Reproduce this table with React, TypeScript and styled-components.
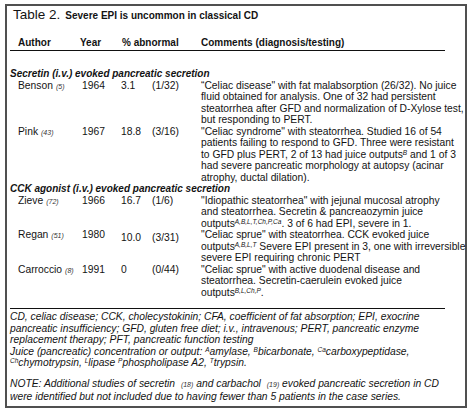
import React from "react";
import styled, { createGlobalStyle } from "styled-components";

const Global = createGlobalStyle`
  html, body { margin: 0; padding: 0; background: #ffffff; }
  body {
    font-family: "Liberation Sans", Arial, sans-serif;
    color: #131313;
  }
`;

const Frame = styled.div`
  box-sizing: border-box;
  margin: 4px 0 0 5px;
  width: 462px;
  height: 404px;
  border: 2px solid #505050;
  padding: 0 0 0 3px;
`;

const Title = styled.div`
  display: flex;
  align-items: baseline;
  gap: 5px;
  padding-left: 3px;
  height: 18px;
  line-height: 18px;
`;

const TitleNum = styled.span`
  font-size: 13.5px;
`;

const TitleText = styled.span`
  font-size: 10px;
  font-weight: bold;
`;

const HeaderRow = styled.div`
  display: grid;
  grid-template-columns: 70px 42px 79px 1fr;
  width: 435px;
  margin-top: 13px;
  padding-bottom: 1px;
  border-bottom: 1px solid #111;
  font-size: 10px;
  font-weight: bold;
  line-height: 12px;
`;

const HeadCell = styled.div<{ $pad?: number }>`
  padding-left: ${(p) => p.$pad ?? 0}px;
  white-space: nowrap;
`;

const SectionHead = styled.div<{ $gap?: number }>`
  margin-top: ${(p) => p.$gap ?? 0}px;
  font-size: 10px;
  font-weight: bold;
  font-style: italic;
  line-height: 11.5px;
  white-space: nowrap;
`;

const Row = styled.div`
  display: grid;
  grid-template-columns: 72px 39px 31px 49px 1fr;
  align-items: start;
  font-size: 10.3px;
  line-height: 11.5px;
`;

const Cell = styled.div<{ $pad?: number; $drop?: number }>`
  padding-left: ${(p) => p.$pad ?? 0}px;
  padding-top: ${(p) => p.$drop ?? 0}px;
  white-space: nowrap;
`;

const Ref = styled.span`
  font-size: 7px;
  font-style: italic;
  margin-left: 3px;
  color: #333;
`;

const Line = styled.div`
  white-space: nowrap;
`;

const Sup = styled.span`
  font-size: 6.5px;
  font-style: italic;
  line-height: 0;
  vertical-align: 3.5px;
`;

const Footnotes = styled.div`
  width: 435px;
  margin-top: 10px;
  padding-top: 2px;
  border-top: 1px solid #111;
  font-size: 10.3px;
  font-style: italic;
  line-height: 11.5px;
`;

const Note = styled.div`
  margin-top: 9.5px;
`;

type Entry = {
  author: string;
  refNo: string;
  year: string;
  pct: string;
  frac: string;
  drop?: number;
  lines: React.ReactNode[];
};

const secretin: Entry[] = [
  {
    author: "Benson",
    refNo: "(5)",
    year: "1964",
    pct: "3.1",
    frac: "(1/32)",
    lines: [
      "\u201CCeliac disease\" with fat malabsorption (26/32). No juice",
      "fluid obtained for analysis. One of 32 had persistent",
      "steatorrhea after GFD and normalization of D-Xylose test,",
      "but responding to PERT.",
    ],
  },
  {
    author: "Pink",
    refNo: "(43)",
    year: "1967",
    pct: "18.8",
    frac: "(3/16)",
    lines: [
      "\"Celiac syndrome\" with steatorrhea. Studied 16 of 54",
      "patients failing to respond to GFD. Three were resistant",
      <>
        to GFD plus PERT, 2 of 13 had juice outputs<Sup>B</Sup> and 1 of 3
      </>,
      "had severe pancreatic morphology at autopsy (acinar",
      "atrophy, ductal dilation).",
    ],
  },
];

const cck: Entry[] = [
  {
    author: "Zieve",
    refNo: "(72)",
    year: "1966",
    pct: "16.7",
    frac: "(1/6)",
    lines: [
      "\"Idiopathic steatorrhea\" with jejunal mucosal atrophy",
      "and steatorrhea. Secretin & pancreaozymin juice",
      <>
        outputs<Sup>A,B,L,T,Ch,P,Ca</Sup>. 3 of 6 had EPI, severe in 1.
      </>,
    ],
  },
  {
    author: "Regan",
    refNo: "(51)",
    year: "1980",
    pct: "10.0",
    frac: "(3/31)",
    drop: 3,
    lines: [
      "\"Celiac sprue\" with steatorrhea. CCK evoked juice",
      <>
        outputs<Sup>A,B,L,T</Sup> Severe EPI present in 3, one with irreversible
      </>,
      "severe EPI requiring chronic PERT",
    ],
  },
  {
    author: "Carroccio",
    refNo: "(8)",
    year: "1991",
    pct: "0",
    frac: "(0/44)",
    lines: [
      "\"Celiac sprue\" with active duodenal disease and",
      "steatorrhea. Secretin-caerulein evoked juice",
      <>
        outputs<Sup>B,L,Ch,P</Sup>.
      </>,
    ],
  },
];

function EntryRow({ e }: { e: Entry }) {
  return (
    <Row>
      <Cell $pad={8}>
        {e.author}
        <Ref>{e.refNo}</Ref>
      </Cell>
      <Cell>{e.year}</Cell>
      <Cell $drop={e.drop}>{e.pct}</Cell>
      <Cell $drop={e.drop}>{e.frac}</Cell>
      <div>
        {e.lines.map((l, i) => (
          <Line key={i}>{l}</Line>
        ))}
      </div>
    </Row>
  );
}

export default function App() {
  return (
    <>
      <Global />
      <Frame>
        <Title>
          <TitleNum>Table 2.</TitleNum>
          <TitleText>Severe EPI is uncommon in classical CD</TitleText>
        </Title>
        <HeaderRow>
          <HeadCell $pad={8}>Author</HeadCell>
          <HeadCell>Year</HeadCell>
          <HeadCell>% abnormal</HeadCell>
          <HeadCell>Comments (diagnosis/testing)</HeadCell>
        </HeaderRow>
        <SectionHead $gap={17}>Secretin (i.v.) evoked pancreatic secretion</SectionHead>
        {secretin.map((e) => (
          <EntryRow key={e.author} e={e} />
        ))}
        <SectionHead>CCK agonist (i.v.) evoked pancreatic secretion</SectionHead>
        {cck.map((e) => (
          <EntryRow key={e.author} e={e} />
        ))}
        <Footnotes>
          <Line>CD, celiac disease; CCK, cholecystokinin; CFA, coefficient of fat absorption; EPI, exocrine</Line>
          <Line>pancreatic insufficiency; GFD, gluten free diet; i.v., intravenous; PERT, pancreatic enzyme</Line>
          <Line>replacement therapy; PFT, pancreatic function testing</Line>
          <Line>
            Juice (pancreatic) concentration or output: <Sup>A</Sup>amylase, <Sup>B</Sup>bicarbonate,{" "}
            <Sup>Ca</Sup>carboxypeptidase,
          </Line>
          <Line>
            <Sup>Ch</Sup>chymotrypsin, <Sup>L</Sup>lipase <Sup>P</Sup>phospholipase A2, <Sup>T</Sup>trypsin.
          </Line>
          <Note>
            <Line>
              NOTE: Additional studies of secretin <Ref>(18)</Ref> and carbachol <Ref>(19)</Ref> evoked
              pancreatic secretion in CD
            </Line>
            <Line>were identified but not included due to having fewer than 5 patients in the case series.</Line>
          </Note>
        </Footnotes>
      </Frame>
    </>
  );
}
